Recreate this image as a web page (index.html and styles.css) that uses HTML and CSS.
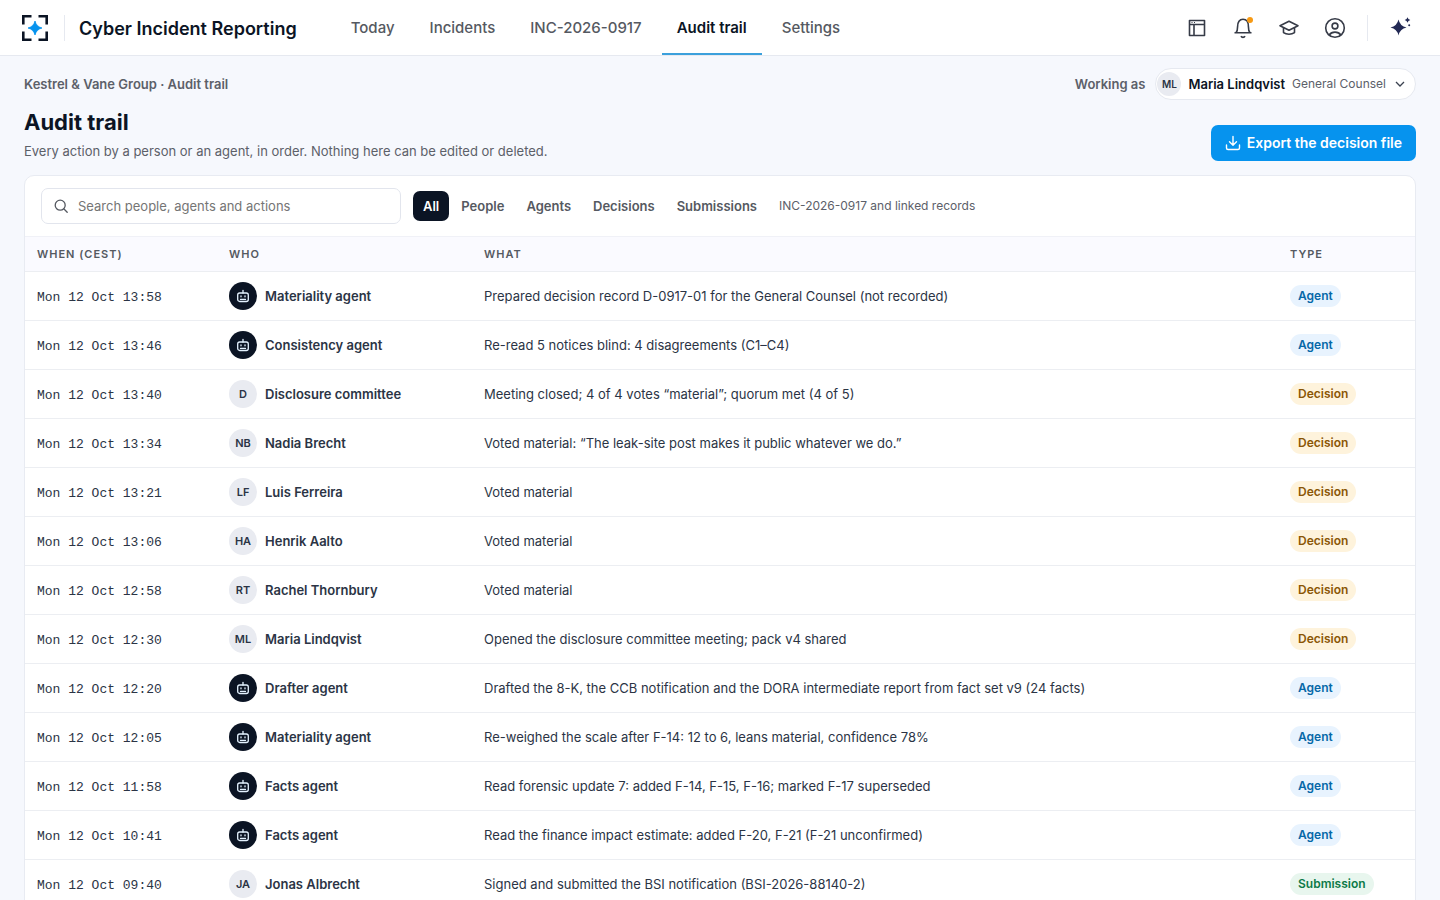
FILE: index.html
```html
<!DOCTYPE html>
<html lang="en">
<head>
    <meta charset="UTF-8">
    <meta name="viewport" content="width=device-width, initial-scale=1">
    <title>Audit trail</title>

    <link rel="stylesheet" href="styles.css">
</head>
<body>

<!-- shared robot icon for the agent avatars -->
<svg class="sprite" aria-hidden="true">
    <symbol id="bot" viewBox="0 0 16 16">
        <path d="M8 5V2.500"/>
        <rect x="2.700" y="5" width="10.600" height="8.500" rx="2"/>
        <path d="M6 7.800v1M10 7.800v1M5.500 11.400h5"/>
    </symbol>
</svg>

<header class="topbar">
    <a href="#" class="logo" aria-label="Home">
        <svg width="26" height="26" viewBox="0 0 26 26">
            <path d="M1.300 9.500V1.300h8.200M16.500 1.300h8.200v8.200M24.700 16.500v8.200h-8.200M9.500 24.700H1.300v-8.200" fill="none" stroke="#0b1424" stroke-width="2.600"/>
            <path d="M13 6q1.400 5.600 7 7q-5.600 1.400-7 7q-1.400-5.600-7-7q5.600-1.400 7-7z" fill="#0693ee" stroke="#0693ee" stroke-width="0.800"/>
        </svg>
    </a>
    <span class="divider"></span>
    <span class="product">Cyber Incident Reporting</span>

    <nav class="nav">
        <a href="#">Today</a>
        <a href="#">Incidents</a>
        <a href="#">INC-2026-0917</a>
        <a href="#" class="active">Audit trail</a>
        <a href="#">Settings</a>
    </nav>

    <div class="tools">
        <button class="tool" aria-label="Layout">
            <svg width="22" height="22" viewBox="0 0 22 22"><path d="M3.500 3.500h15v15h-15zM3.500 7.500h15M8 7.500v11"/><path d="M5.500 5.500h1M8 5.500h1" stroke-width="1.200"/></svg>
        </button>
        <button class="tool" aria-label="Notifications">
            <svg width="22" height="22" viewBox="0 0 22 22"><path d="M2.500 15.800h17M4 15.800c1.300-1.500 1.600-3 1.600-6.300C5.600 5 7.500 2.300 11 2.300s5.400 2.700 5.400 7.200c0 3.300.3 4.800 1.600 6.300"/><path d="M9 19.200c.8 1.600 3.200 1.600 4 0"/></svg>
            <span class="dot"></span>
        </button>
        <button class="tool" aria-label="Learning">
            <svg width="22" height="22" viewBox="0 0 22 22"><path d="M11 4.200L20 8.700 11 13.200 2 8.700z"/><path d="M5.500 10.600v5c3 2.200 8 2.200 11 0v-5"/></svg>
        </button>
        <button class="tool" aria-label="Account">
            <svg width="22" height="22" viewBox="0 0 22 22"><circle cx="11" cy="11" r="9.300"/><circle cx="11" cy="9" r="2.900"/><path d="M5.200 18c1.300-2 3.300-2.900 5.800-2.900s4.500.9 5.800 2.900"/></svg>
        </button>
        <span class="divider"></span>
        <button class="tool spark" aria-label="Assistant">
            <svg width="22" height="22" viewBox="0 0 22 22"><path d="M9.500 2.500q1.400 6.600 8 8q-6.600 1.400-8 8q-1.400-6.600-8-8q6.600-1.400 8-8z"/><path d="M18.500.2q.5 2.300 2.800 2.800q-2.300.5-2.800 2.800q-.5-2.300-2.800-2.800q2.300-.5 2.800-2.800z"/><circle cx="20.200" cy="8.300" r="1"/></svg>
        </button>
    </div>
</header>

<main class="page">
    <div class="context">
        <span class="crumbs">Kestrel &amp; Vane Group · Audit trail</span>
        <div class="working">
            <span id="working-label">Working as</span>
            <button class="persona" aria-haspopup="listbox" aria-describedby="working-label">
                <span class="avatar small">ML</span>
                <b>Maria Lindqvist</b>
                <span class="role">General Counsel</span>
                <svg width="12" height="12" viewBox="0 0 12 12"><path d="M2 4l4 4 4-4"/></svg>
            </button>
        </div>
    </div>

    <div class="heading">
        <div>
            <h1>Audit trail</h1>
            <p>Every action by a person or an agent, in order. Nothing here can be edited or deleted.</p>
        </div>
        <button class="export">
            <svg width="16" height="16" viewBox="0 0 16 16"><path d="M8 1.500v8.500M4.500 6.800L8 10.300l3.500-3.500M1.500 10v3a1.500 1.500 0 0 0 1.500 1.500h10a1.500 1.500 0 0 0 1.500-1.500v-3"/></svg>
            Export the decision file
        </button>
    </div>

    <section class="card">
        <div class="filters">
            <label class="search">
                <svg width="14" height="14" viewBox="0 0 14 14"><circle cx="6.200" cy="6.200" r="5"/><path d="M10 10l3.200 3.200"/></svg>
                <input type="search" placeholder="Search people, agents and actions" aria-label="Search people, agents and actions">
            </label>
            <div class="chips">
                <button class="chip on">All</button>
                <button class="chip">People</button>
                <button class="chip">Agents</button>
                <button class="chip">Decisions</button>
                <button class="chip">Submissions</button>
            </div>
            <span class="scope">INC-2026-0917 and linked records</span>
        </div>

        <table class="log">
            <thead>
                <tr>
                    <th class="when">When (CEST)</th>
                    <th class="who">Who</th>
                    <th>What</th>
                    <th class="type">Type</th>
                </tr>
            </thead>
            <tbody>
                <tr>
                    <td class="time">Mon 12 Oct 13:58</td>
                    <td><div class="actor"><span class="avatar bot"><svg><use href="#bot"/></svg></span>Materiality agent</div></td>
                    <td>Prepared decision record D-0917-01 for the General Counsel (not recorded)</td>
                    <td><span class="pill agent">Agent</span></td>
                </tr>
                <tr>
                    <td class="time">Mon 12 Oct 13:46</td>
                    <td><div class="actor"><span class="avatar bot"><svg><use href="#bot"/></svg></span>Consistency agent</div></td>
                    <td>Re-read 5 notices blind: 4 disagreements (C1–C4)</td>
                    <td><span class="pill agent">Agent</span></td>
                </tr>
                <tr>
                    <td class="time">Mon 12 Oct 13:40</td>
                    <td><div class="actor"><span class="avatar">D</span>Disclosure committee</div></td>
                    <td>Meeting closed; 4 of 4 votes “material”; quorum met (4 of 5)</td>
                    <td><span class="pill decision">Decision</span></td>
                </tr>
                <tr>
                    <td class="time">Mon 12 Oct 13:34</td>
                    <td><div class="actor"><span class="avatar">NB</span>Nadia Brecht</div></td>
                    <td>Voted material: “The leak-site post makes it public whatever we do.”</td>
                    <td><span class="pill decision">Decision</span></td>
                </tr>
                <tr>
                    <td class="time">Mon 12 Oct 13:21</td>
                    <td><div class="actor"><span class="avatar">LF</span>Luis Ferreira</div></td>
                    <td>Voted material</td>
                    <td><span class="pill decision">Decision</span></td>
                </tr>
                <tr>
                    <td class="time">Mon 12 Oct 13:06</td>
                    <td><div class="actor"><span class="avatar">HA</span>Henrik Aalto</div></td>
                    <td>Voted material</td>
                    <td><span class="pill decision">Decision</span></td>
                </tr>
                <tr>
                    <td class="time">Mon 12 Oct 12:58</td>
                    <td><div class="actor"><span class="avatar">RT</span>Rachel Thornbury</div></td>
                    <td>Voted material</td>
                    <td><span class="pill decision">Decision</span></td>
                </tr>
                <tr>
                    <td class="time">Mon 12 Oct 12:30</td>
                    <td><div class="actor"><span class="avatar">ML</span>Maria Lindqvist</div></td>
                    <td>Opened the disclosure committee meeting; pack v4 shared</td>
                    <td><span class="pill decision">Decision</span></td>
                </tr>
                <tr>
                    <td class="time">Mon 12 Oct 12:20</td>
                    <td><div class="actor"><span class="avatar bot"><svg><use href="#bot"/></svg></span>Drafter agent</div></td>
                    <td>Drafted the 8-K, the CCB notification and the DORA intermediate report from fact set v9 (24 facts)</td>
                    <td><span class="pill agent">Agent</span></td>
                </tr>
                <tr>
                    <td class="time">Mon 12 Oct 12:05</td>
                    <td><div class="actor"><span class="avatar bot"><svg><use href="#bot"/></svg></span>Materiality agent</div></td>
                    <td>Re-weighed the scale after F-14: 12 to 6, leans material, confidence 78%</td>
                    <td><span class="pill agent">Agent</span></td>
                </tr>
                <tr>
                    <td class="time">Mon 12 Oct 11:58</td>
                    <td><div class="actor"><span class="avatar bot"><svg><use href="#bot"/></svg></span>Facts agent</div></td>
                    <td>Read forensic update 7: added F-14, F-15, F-16; marked F-17 superseded</td>
                    <td><span class="pill agent">Agent</span></td>
                </tr>
                <tr>
                    <td class="time">Mon 12 Oct 10:41</td>
                    <td><div class="actor"><span class="avatar bot"><svg><use href="#bot"/></svg></span>Facts agent</div></td>
                    <td>Read the finance impact estimate: added F-20, F-21 (F-21 unconfirmed)</td>
                    <td><span class="pill agent">Agent</span></td>
                </tr>
                <tr>
                    <td class="time">Mon 12 Oct 09:40</td>
                    <td><div class="actor"><span class="avatar">JA</span>Jonas Albrecht</div></td>
                    <td>Signed and submitted the BSI notification (BSI-2026-88140-2)</td>
                    <td><span class="pill submission">Submission</span></td>
                </tr>
            </tbody>
        </table>
    </section>
</main>

</body>
</html>
```
FILE: styles.css
```css
* {
    box-sizing: border-box;
}
body {
    margin: 0;
    background: #f6f8fd;
    color: #2b3445;
    font-family: Inter, "Liberation Sans", sans-serif;
    font-size: 13px;
    line-height: 20px;
}
button,
input {
    font: inherit;
    color: inherit;
}
button {
    border: 0;
    padding: 0;
    background: none;
    cursor: pointer;
}
svg {
    flex: none;
    display: block;
}
.sprite {
    display: none;
}

/* top bar */
.topbar {
    display: flex;
    align-items: center;
    height: 56px;
    padding: 0 24px 0 22px;
    background: #fff;
    border-bottom: 1px solid #e6e9f0;
}
.divider {
    width: 1px;
    height: 26px;
    background: #e6e9f0;
}
.logo {
    margin-right: 16px;
}
.product {
    margin-left: 14px;
    padding-top: 2px;
    color: #0b1424;
    font-size: 18px;
    font-weight: 600;
    white-space: nowrap;
}
.nav {
    display: flex;
    align-self: stretch;
    gap: 5px;
    margin-left: 39px;
}
.nav a {
    display: flex;
    align-items: center;
    padding: 2px 15px 0;
    border-bottom: 2px solid transparent;
    color: #555961;
    font-size: 15px;
    font-weight: 500;
    text-decoration: none;
    white-space: nowrap;
}
.nav a.active {
    border-color: #3ba0dc;
    color: #0b1424;
    font-weight: 600;
}
.tools {
    display: flex;
    align-items: center;
    gap: 10px;
    margin-left: auto;
}
.tool {
    position: relative;
    display: flex;
    align-items: center;
    justify-content: center;
    width: 36px;
    height: 36px;
}
.tool svg {
    fill: none;
    stroke: #363b47;
    stroke-width: 1.6;
    stroke-linejoin: round;
}
.tools .divider {
    margin-left: 4px;
}
.tools .spark {
    margin-left: 4px;
    margin-right: -2px;
}
.spark svg {
    fill: #232a55;
    stroke: none;
}
.dot {
    position: absolute;
    top: 7px;
    right: 8px;
    width: 6px;
    height: 6px;
    border-radius: 50%;
    background: #f79a14;
}

/* page head */
.page {
    padding: 12px 24px 24px;
}
.context,
.heading,
.working {
    display: flex;
    align-items: center;
    justify-content: space-between;
}
.context {
    color: #5c6069;
    font-weight: 600;
}
.working {
    gap: 10px;
}
.persona {
    display: flex;
    align-items: center;
    height: 32px;
    padding: 0 9px 0 1px;
    border: 1px solid #e6e9f0;
    border-radius: 16px;
    background: #fff;
}
.persona b {
    margin: 0 7px;
    color: #0b1424;
    font-weight: 600;
}
.persona .role {
    margin-right: 8px;
    font-size: 12px;
    font-weight: 400;
}
.persona svg {
    fill: none;
    stroke: #3b4250;
    stroke-width: 1.3;
}
.heading {
    align-items: flex-end;
    padding: 8px 0 14px;
}
h1 {
    margin: 0 0 5px;
    color: #0b1424;
    font-size: 22px;
    line-height: 28px;
    font-weight: 700;
}
.heading p {
    margin: 0;
    color: #5c6069;
}
.export {
    display: flex;
    align-items: center;
    gap: 6px;
    height: 36px;
    padding: 0 14px;
    border-radius: 7px;
    background: #0693ee;
    color: #fff;
    font-size: 14px;
    font-weight: 600;
}
.export svg {
    fill: none;
    stroke: currentColor;
    stroke-width: 1.4;
    stroke-linecap: round;
    stroke-linejoin: round;
}

/* log card */
.card {
    border: 1px solid #e8ebf2;
    border-radius: 10px;
    background: #fff;
    overflow: hidden;
}
.filters {
    display: flex;
    align-items: center;
    gap: 12px;
    padding: 12px 16px;
}
.search {
    display: flex;
    align-items: center;
    gap: 10px;
    width: 360px;
    height: 36px;
    padding: 0 12px;
    border: 1px solid #e2e5ed;
    border-radius: 7px;
}
.search svg {
    fill: none;
    stroke: #555961;
    stroke-width: 1.3;
    stroke-linecap: round;
}
.search input {
    flex: 1;
    min-width: 0;
    padding: 0;
    border: 0;
    outline: 0;
    background: none;
}
.search input::placeholder {
    color: #757575;
}
.chips {
    display: flex;
    gap: 2px;
}
.chip {
    height: 30px;
    padding: 0 10px;
    border-radius: 7px;
    color: #555961;
    font-weight: 600;
}
.chip.on {
    background: #0b1424;
    color: #fff;
}
.scope {
    color: #5c6069;
    font-size: 12px;
}

.log {
    width: 100%;
    border-collapse: collapse;
    table-layout: fixed;
}
.log th {
    height: 35px;
    padding: 0 12px;
    border-top: 1px solid #f0f1f7;
    background: #fafaff;
    color: #555961;
    font-size: 11px;
    font-weight: 600;
    letter-spacing: 1px;
    text-align: left;
    text-transform: uppercase;
}
.log td {
    height: 49px;
    padding: 0 12px;
    border-top: 1px solid #eceef2;
}
.when {
    width: 192px;
}
.who {
    width: 255px;
}
.type {
    width: 137px;
}
.log .time {
    padding-top: 4px;
    font-family: "Liberation Mono", monospace;
    white-space: nowrap;
}
.actor {
    display: flex;
    align-items: center;
    gap: 8px;
    font-weight: 600;
}
.avatar {
    flex: none;
    display: flex;
    align-items: center;
    justify-content: center;
    width: 28px;
    height: 28px;
    border-radius: 50%;
    background: #e9ebf1;
    color: #2b3445;
    font-size: 11px;
    font-weight: 600;
}
.avatar.small {
    width: 24px;
    height: 24px;
    font-size: 10px;
}
.avatar.bot {
    background: #0b1424;
}
.avatar svg {
    width: 16px;
    height: 16px;
    fill: none;
    stroke: #e4f2ff;
    stroke-width: 1.3;
    stroke-linecap: round;
}
.pill {
    display: inline-block;
    padding: 0 8px;
    border-radius: 11px;
    font-size: 12px;
    line-height: 22px;
    font-weight: 600;
}
.pill.agent {
    background: #e8f3fe;
    color: #0668a8;
}
.pill.decision {
    background: #fef3dc;
    color: #8a5606;
}
.pill.submission {
    background: #e8f6ee;
    color: #0d7a48;
}
```
